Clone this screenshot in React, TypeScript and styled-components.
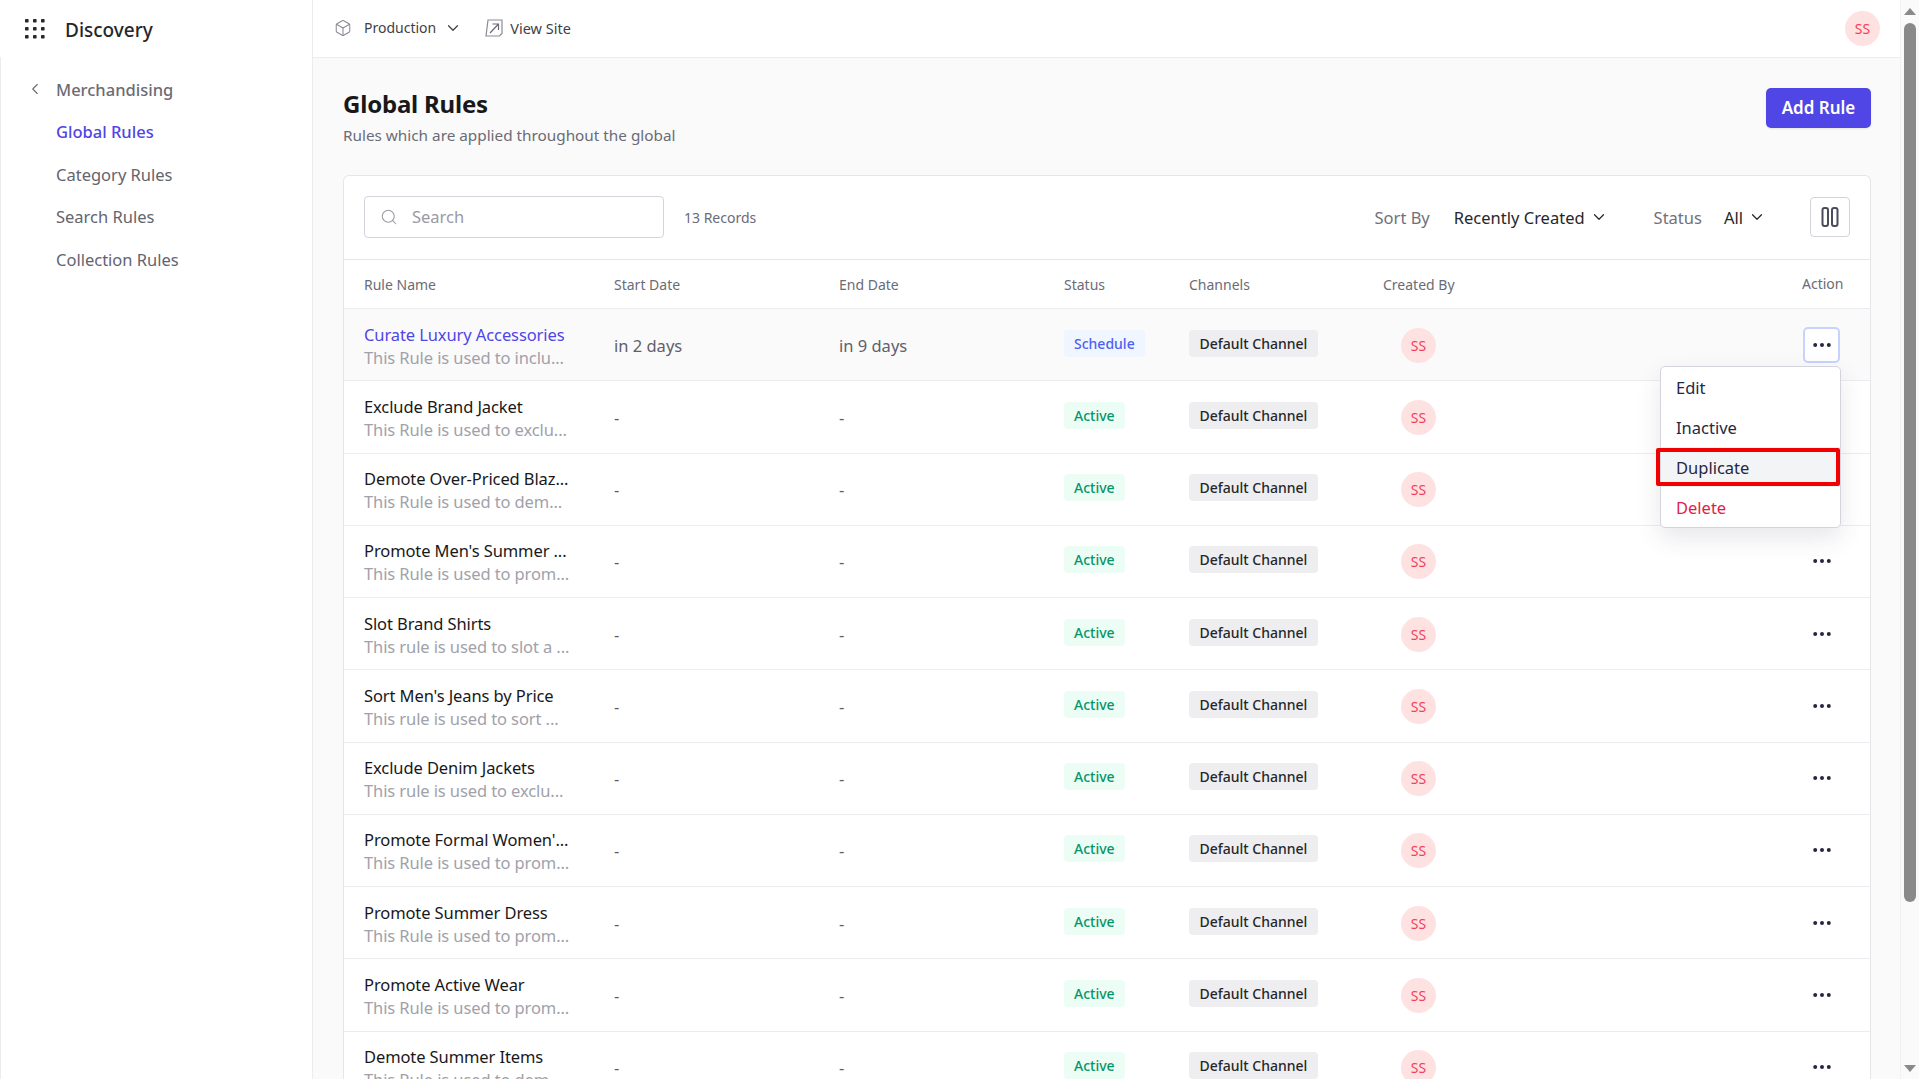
import React from "react";
import styled, { createGlobalStyle } from "styled-components";
import { Box, ChevronDown, ChevronLeft, Search } from "lucide-react";

const Global = createGlobalStyle`
  html, body { margin: 0; padding: 0; height: 100%; overflow: hidden; background: #fff; }
  body { font-family: "Noto Sans", "Open Sans", sans-serif; color: #18181b; }
  * { box-sizing: border-box; }
`;

const Shell = styled.div`
  display: flex;
  width: 1919px;
  height: 1079px;
  overflow: hidden;
`;
const Sidebar = styled.aside`
  width: 313px;
  flex: none;
  display: flex;
  flex-direction: column;
  border-right: 1px solid #ececf0;
  background: #fff;
`;
const Brand = styled.div`
  height: 57px;
  flex: none;
  display: flex;
  align-items: center;
  gap: 20px;
  padding-left: 25px;
  font-size: 19px;
  font-weight: 500;
  color: #27272a;
`;
const BrandName = styled.span`
  padding-top: 2px;
`;
const SideNav = styled.nav`
  flex: 1;
  display: flex;
  flex-direction: column;
  border-left: 1px solid #ececf0;
  padding-top: 11px;
`;
const SideItem = styled.div<{ $active?: boolean }>`
  height: 42.5px;
  display: flex;
  align-items: center;
  padding-left: 55px;
  font-size: 16.5px;
  color: ${(p) => (p.$active ? "#4f46e5" : "#64646e")};
  font-weight: ${(p) => (p.$active ? 500 : 400)};
`;
const SideBack = styled(SideItem)`
  padding-left: 25px;
  gap: 12px;
  font-weight: 500;
  color: #6b6b76;
`;
const Center = styled.div`
  flex: 1;
  min-width: 0;
  display: flex;
  flex-direction: column;
  background: #fafafa;
`;
const TopBar = styled.header`
  height: 58px;
  flex: none;
  display: flex;
  align-items: center;
  background: #fff;
  border-bottom: 1px solid #ececf0;
  padding: 0 20px 0 21px;
  font-size: 14px;
  color: #3f3f46;
`;
const EnvIcon = styled.span`
  display: flex;
  color: #8a8a96;
  margin-right: 12px;
  margin-top: -1px;
`;
const EnvLabel = styled.span`
  margin-top: -2px;
`;
const EnvChevron = styled.span`
  display: flex;
  color: #3f3f46;
  margin-left: 8px;
  margin-right: 23px;
  margin-top: -1px;
`;
const SiteLink = styled.span`
  display: flex;
  align-items: center;
  gap: 7px;
  font-size: 14.5px;
  margin-top: -1px;
`;
const Avatar = styled.span`
  width: 35px;
  height: 35px;
  border-radius: 50%;
  background: #fee2e2;
  color: #f43f5e;
  font-size: 14px;
  display: flex;
  align-items: center;
  justify-content: center;
  flex: none;
`;
const TopAvatar = styled(Avatar)`
  margin-left: auto;
`;
const Content = styled.main`
  flex: 1;
  min-height: 0;
  overflow: hidden;
  padding: 29px 29px 0 30px;
`;
const Head = styled.div`
  display: flex;
  justify-content: space-between;
  align-items: flex-start;
  height: 88px;
`;
const Title = styled.h1`
  margin: 0;
  font-size: 24px;
  line-height: 34px;
  font-weight: 700;
  letter-spacing: -0.2px;
  color: #18181b;
`;
const Sub = styled.p`
  margin: 4px 0 0;
  font-size: 15.3px;
  line-height: 20px;
  color: #6b6b76;
`;
const AddButton = styled.button`
  width: 105px;
  height: 40px;
  margin-top: 1px;
  padding: 0 0 1px;
  border: 0;
  border-radius: 5px;
  background: #4f46e5;
  color: #fff;
  font: 600 17px "Noto Sans", sans-serif;
  box-shadow: 0 1px 2px rgba(0, 0, 0, 0.08);
`;
const Card = styled.section`
  position: relative;
  background: #fff;
  border: 1px solid #e6e6ea;
  border-bottom: 0;
  border-radius: 6px 6px 0 0;
`;
const Toolbar = styled.div`
  height: 84px;
  display: flex;
  align-items: center;
  padding: 0 20px 1px;
  border-bottom: 1px solid #e6e6ea;
`;
const SearchBox = styled.div`
  width: 300px;
  height: 42px;
  display: flex;
  align-items: center;
  gap: 14px;
  padding-left: 15px;
  margin-top: -1px;
  border: 1px solid #d4d4dc;
  border-radius: 4px;
  font-size: 16.5px;
  color: #9a9aa5;
  background: #fff;
`;
const Records = styled.span`
  margin-left: 20px;
  font-size: 14px;
  color: #6b6b76;
`;
const Filters = styled.div`
  margin-left: auto;
  display: flex;
  align-items: center;
`;
const FilterLabel = styled.span<{ $gap: number }>`
  font-size: 16.5px;
  color: #71717a;
  margin-right: ${(p) => p.$gap}px;
`;
const FilterValue = styled.span<{ $gap: number }>`
  display: flex;
  align-items: center;
  gap: 5px;
  font-size: 16.5px;
  color: #27272a;
  margin-right: ${(p) => p.$gap}px;
`;
const ColumnsButton = styled.span`
  width: 40px;
  height: 40px;
  margin-top: -1px;
  display: flex;
  align-items: center;
  justify-content: center;
  border: 1px solid #d4d4dc;
  border-radius: 4px;
  color: #4b4b5a;
`;
const rowGrid = `
  display: grid;
  grid-template-columns: 250px 225px 225px 125px 194px 1fr 69px;
  align-items: center;
  padding-left: 20px;
`;
const HeaderRow = styled.div`
  ${rowGrid}
  height: 49px;
  border-bottom: 1px solid #ececf0;
  font-size: 14px;
  color: #6b6b76;
`;
const HeadCell = styled.span<{ $first?: boolean }>`
  margin-left: ${(p) => (p.$first ? "-1px" : "0")};
`;
const ActionHead = styled.span`
  margin-top: -2px;
  margin-left: 1px;
`;
const Row = styled.div<{ $hover?: boolean }>`
  ${rowGrid}
  height: 72.25px;
  border-bottom: 1px solid #ececf0;
  background: ${(p) => (p.$hover ? "#fafafa" : "#fff")};
`;
const NameCell = styled.div`
  display: flex;
  flex-direction: column;
  white-space: nowrap;
  padding-top: 2px;
`;
const Name = styled.span<{ $link?: boolean }>`
  font-size: 16.5px;
  line-height: 23px;
  letter-spacing: -0.1px;
  color: ${(p) => (p.$link ? "#4f46e5" : "#18181b")};
`;
const Desc = styled.span`
  font-size: 16.5px;
  line-height: 23px;
  letter-spacing: -0.1px;
  color: #a1a1aa;
`;
const DateCell = styled.span`
  font-size: 16.5px;
  padding-top: 1px;
  color: #5f5f6b;
`;
const StatusChip = styled.span<{ $kind: "active" | "schedule" }>`
  justify-self: start;
  height: 27px;
  padding: 0 10px;
  margin-top: -3px;
  display: flex;
  align-items: center;
  border-radius: 4px;
  font-size: 14px;
  font-weight: 500;
  background: ${(p) => (p.$kind === "active" ? "#ecfdf5" : "#eff6ff")};
  color: ${(p) => (p.$kind === "active" ? "#059669" : "#4f5ff0")};
`;
const ChannelChip = styled.span`
  justify-self: start;
  height: 27px;
  padding: 0 10.5px;
  margin-top: -3px;
  display: flex;
  align-items: center;
  border-radius: 4px;
  font-size: 14px;
  font-weight: 500;
  background: #eeeef0;
  color: #27272a;
`;
const CreatorCell = styled.div`
  padding-left: 18px;
  padding-top: 1px;
`;
const DotsButton = styled.span<{ $open?: boolean }>`
  width: 37px;
  height: 36px;
  margin-left: 2px;
  display: flex;
  align-items: center;
  justify-content: center;
  border-radius: 5px;
  color: #27273f;
  background: ${(p) => (p.$open ? "#fff" : "transparent")};
  border: 2px solid ${(p) => (p.$open ? "#c7d2fe" : "transparent")};
`;
const Menu = styled.div`
  position: absolute;
  top: 190px;
  right: 29px;
  width: 181px;
  background: #fff;
  border: 1px solid #d4d4dc;
  border-radius: 5px;
  box-shadow: 0 10px 24px rgba(60, 60, 90, 0.12);
  z-index: 2;
`;
const MenuItem = styled.div<{ $danger?: boolean; $hover?: boolean }>`
  height: 40px;
  display: flex;
  align-items: center;
  padding-left: 15px;
  font-size: 16.5px;
  color: ${(p) => (p.$danger ? "#e11d48" : "#27273f")};
  background: ${(p) => (p.$hover ? "#f3f4f6" : "transparent")};
`;
const Highlight = styled.span`
  position: absolute;
  left: -5px;
  right: 0;
  top: 81px;
  height: 38px;
  border: 4px solid #f00000;
  border-radius: 2px;
  pointer-events: none;
`;
const Scrollbar = styled.div`
  width: 19px;
  flex: none;
  display: flex;
  flex-direction: column;
  align-items: center;
  background: #fafafa;
  border-left: 1px solid #f2f2f4;
`;
const ArrowUp = styled.span`
  margin-top: 8px;
  width: 0;
  height: 0;
  border-left: 6px solid transparent;
  border-right: 6px solid transparent;
  border-bottom: 7px solid #8a8a8a;
`;
const Thumb = styled.span`
  width: 12px;
  height: 879px;
  margin-top: 8px;
  border-radius: 6px;
  background: #8a8a8a;
`;
const ArrowDown = styled.span`
  margin-top: auto;
  margin-bottom: 7px;
  width: 0;
  height: 0;
  border-left: 6px solid transparent;
  border-right: 6px solid transparent;
  border-top: 7px solid #8a8a8a;
`;

const GridIcon = () => (
  <svg width="20" height="20" viewBox="0 0 20 20" fill="#27272a">
    {[0, 8, 16].flatMap((y) =>
      [0, 8, 16].map((x) => <rect key={`${x}-${y}`} x={x} y={y} width="3.6" height="3.6" rx="0.8" />)
    )}
  </svg>
);
const ExternalIcon = () => (
  <svg width="18" height="18" viewBox="0 0 18 18" fill="none" stroke="#8a8a96" strokeWidth="1.2">
    <path d="M1 17 3 1H17V14.5L14.5 17Z" />
    <path d="M5 14 13.5 5M7.5 5h6v6" stroke="#6b6b76" />
  </svg>
);
const DotsIcon = () => (
  <svg width="18" height="4" viewBox="0 0 18 4" fill="currentColor">
    <circle cx="2.2" cy="2" r="2" />
    <circle cx="9" cy="2" r="2" />
    <circle cx="15.8" cy="2" r="2" />
  </svg>
);
const ColumnsIcon = () => (
  <svg width="18" height="20" viewBox="0 0 18 20" fill="none" stroke="currentColor" strokeWidth="2">
    <rect x="1.5" y="1" width="5.5" height="18" rx="2" />
    <rect x="11" y="1" width="5.5" height="18" rx="2" />
  </svg>
);

const rows = [
  ["Curate Luxury Accessories", "This Rule is used to inclu..."],
  ["Exclude Brand Jacket", "This Rule is used to exclu..."],
  ["Demote Over-Priced Blaz...", "This Rule is used to dem..."],
  ["Promote Men's Summer ...", "This Rule is used to prom..."],
  ["Slot Brand Shirts", "This rule is used to slot a ..."],
  ["Sort Men's Jeans by Price", "This rule is used to sort ..."],
  ["Exclude Denim Jackets", "This rule is used to exclu..."],
  ["Promote Formal Women'...", "This Rule is used to prom..."],
  ["Promote Summer Dress", "This Rule is used to prom..."],
  ["Promote Active Wear", "This Rule is used to prom..."],
  ["Demote Summer Items", "This Rule is used to dem..."],
];

export default function App() {
  return (
    <Shell>
      <Global />
      <Sidebar>
        <Brand>
          <GridIcon />
          <BrandName>Discovery</BrandName>
        </Brand>
        <SideNav>
          <SideBack>
            <ChevronLeft size={18} strokeWidth={1.5} />
            Merchandising
          </SideBack>
          <SideItem $active>Global Rules</SideItem>
          <SideItem>Category Rules</SideItem>
          <SideItem>Search Rules</SideItem>
          <SideItem>Collection Rules</SideItem>
        </SideNav>
      </Sidebar>
      <Center>
        <TopBar>
          <EnvIcon>
            <Box size={18} strokeWidth={1.4} />
          </EnvIcon>
          <EnvLabel>Production</EnvLabel>
          <EnvChevron>
            <ChevronDown size={18} strokeWidth={1.6} />
          </EnvChevron>
          <SiteLink>
            <ExternalIcon />
            View Site
          </SiteLink>
          <TopAvatar>SS</TopAvatar>
        </TopBar>
        <Content>
          <Head>
            <div>
              <Title>Global Rules</Title>
              <Sub>Rules which are applied throughout the global</Sub>
            </div>
            <AddButton>Add Rule</AddButton>
          </Head>
          <Card>
            <Toolbar>
              <SearchBox>
                <Search size={18} strokeWidth={1.4} />
                Search
              </SearchBox>
              <Records>13 Records</Records>
              <Filters>
                <FilterLabel $gap={24}>Sort By</FilterLabel>
                <FilterValue $gap={46}>
                  Recently Created
                  <ChevronDown size={18} strokeWidth={1.6} />
                </FilterValue>
                <FilterLabel $gap={22}>Status</FilterLabel>
                <FilterValue $gap={44}>
                  All
                  <ChevronDown size={18} strokeWidth={1.6} />
                </FilterValue>
                <ColumnsButton>
                  <ColumnsIcon />
                </ColumnsButton>
              </Filters>
            </Toolbar>
            <HeaderRow>
              <HeadCell>Rule Name</HeadCell>
              <span>Start Date</span>
              <span>End Date</span>
              <span>Status</span>
              <span>Channels</span>
              <span>Created By</span>
              <ActionHead>Action</ActionHead>
            </HeaderRow>
            {rows.map(([name, desc], i) => (
              <Row key={name} $hover={i === 0}>
                <NameCell>
                  <Name $link={i === 0}>{name}</Name>
                  <Desc>{desc}</Desc>
                </NameCell>
                <DateCell>{i === 0 ? "in 2 days" : "-"}</DateCell>
                <DateCell>{i === 0 ? "in 9 days" : "-"}</DateCell>
                <StatusChip $kind={i === 0 ? "schedule" : "active"}>{i === 0 ? "Schedule" : "Active"}</StatusChip>
                <ChannelChip>Default Channel</ChannelChip>
                <CreatorCell>
                  <Avatar>SS</Avatar>
                </CreatorCell>
                <DotsButton $open={i === 0}>
                  <DotsIcon />
                </DotsButton>
              </Row>
            ))}
            <Menu>
              <MenuItem>Edit</MenuItem>
              <MenuItem>Inactive</MenuItem>
              <MenuItem $hover>Duplicate</MenuItem>
              <MenuItem $danger>Delete</MenuItem>
              <Highlight />
            </Menu>
          </Card>
        </Content>
      </Center>
      <Scrollbar>
        <ArrowUp />
        <Thumb />
        <ArrowDown />
      </Scrollbar>
    </Shell>
  );
}
